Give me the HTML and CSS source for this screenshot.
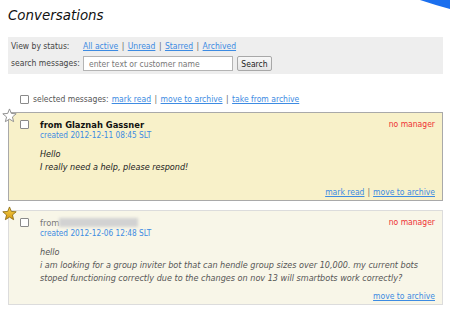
FILE: index.html
```html
<!DOCTYPE html>
<html>
<head>
    <title>Conversations</title>
    <meta charset="UTF-8">
    <link rel="stylesheet" href="styles.css">
</head>
<body>
    <svg class="corner" width="30" height="10" viewBox="0 0 30 10">
        <path d="M0 0 H30 V9 Q15 5 0 0 Z" fill="#1b6fee"/>
    </svg>

    <h1 class="page-title">Conversations</h1>

    <div class="filter">
        <span class="filter-label">View by status:</span>
        <span class="filter-links">
            <a href="#">All active</a><span class="sep">|</span><a href="#">Unread</a><span class="sep">|</span><a href="#">Starred</a><span class="sep">|</span><a href="#">Archived</a>
        </span>
        <span class="filter-label">search messages:</span>
        <span class="search">
            <input class="search-input" type="text" placeholder="enter text or customer name">
            <button class="search-btn">Search</button>
        </span>
    </div>

    <div class="bulk">
        <input class="check" type="checkbox">
        <span class="bulk-label">selected messages:</span>
        <a href="#">mark read</a><span class="sep">|</span><a href="#">move to archive</a><span class="sep">|</span><a href="#">take from archive</a>
    </div>

    <div class="message unread">
        <svg class="star" viewBox="0 0 16 16">
            <path d="M8 1 L9.95 5.8 L15.13 6.18 L11.15 9.55 L12.41 14.57 L8 11.85 L3.59 14.57 L4.85 9.55 L0.87 6.18 L6.05 5.8 Z" fill="#fff" stroke="#8c8c8c" stroke-width="1" stroke-linejoin="round"/>
        </svg>
        <input class="check" type="checkbox">
        <div class="msg-main">
            <div class="msg-head">
                <div>
                    <div class="msg-from">from Glaznah Gassner</div>
                    <div class="msg-date">created 2012-12-11 08:45 SLT</div>
                </div>
                <div class="msg-status">no manager</div>
            </div>
            <p class="msg-text">Hello<br>I really need a help, please respond!</p>
            <div class="msg-actions">
                <a href="#">mark read</a><span class="sep">|</span><a href="#">move to archive</a>
            </div>
        </div>
    </div>

    <div class="message read">
        <svg class="star" viewBox="0 0 16 16">
            <defs>
                <linearGradient id="gold" x1="0" y1="0" x2="0" y2="1">
                    <stop offset="0" stop-color="#f7d24a"/>
                    <stop offset="1" stop-color="#d79a12"/>
                </linearGradient>
            </defs>
            <path d="M8 1 L9.95 5.8 L15.13 6.18 L11.15 9.55 L12.41 14.57 L8 11.85 L3.59 14.57 L4.85 9.55 L0.87 6.18 L6.05 5.8 Z" fill="url(#gold)" stroke="#8a6a12" stroke-width="0.9" stroke-linejoin="round"/>
        </svg>
        <input class="check" type="checkbox">
        <div class="msg-main">
            <div class="msg-head">
                <div>
                    <div class="msg-from">from<span class="name-hidden"></span></div>
                    <div class="msg-date">created 2012-12-06 12:48 SLT</div>
                </div>
                <div class="msg-status">no manager</div>
            </div>
            <p class="msg-text">hello<br>i am looking for a group inviter bot that can hendle group sizes over 10,000. my current bots stoped functioning correctly due to the changes on nov 13 will smartbots work correctly?</p>
            <div class="msg-actions">
                <a href="#">move to archive</a>
            </div>
        </div>
    </div>
</body>
</html>
```

FILE: styles.css
```css
body {
    margin: 0;
    padding: 0 7px 0 8px;
    position: relative;
    font-family: "DejaVu Sans Condensed", "DejaVu Sans", sans-serif;
    font-stretch: condensed;
    font-size: 8.5px;
    color: #333;
    background: #fff;
}
a {
    color: #3d8be2;
    text-decoration: underline;
}
.sep {
    color: #666;
    margin: 0 3.5px;
}
.corner {
    position: absolute;
    top: 0;
    right: 0;
}
.page-title {
    margin: 7px 0 13px;
    font-size: 14.9px;
    font-style: italic;
    font-weight: normal;
    line-height: 17px;
    color: #111;
}

/* filter box */
.filter {
    display: grid;
    grid-template-columns: 72px auto;
    row-gap: 3px;
    align-items: center;
    padding: 3px;
    background: #eee;
}
.filter-label {
    color: #444;
    line-height: 13px;
}
.filter-links {
    line-height: 13px;
}
.search {
    display: flex;
    align-items: center;
    gap: 4px;
}
.search-input {
    box-sizing: border-box;
    width: 150px;
    height: 15px;
    margin: 0;
    padding: 0 5px;
    border: 1px solid #b4b4b4;
    font: inherit;
    color: #333;
    background: #fff;
}
.search-input::placeholder {
    color: #777;
}
.search-btn {
    box-sizing: border-box;
    width: 35px;
    height: 15px;
    margin: 0;
    padding: 0;
    border: 1px solid #a8a8a8;
    border-radius: 2px;
    background: linear-gradient(#f8f8f8, #e4e4e4);
    font: inherit;
    color: #222;
}

.check {
    appearance: none;
    box-sizing: border-box;
    flex: none;
    width: 9px;
    height: 9px;
    margin: 0;
    border: 1px solid #8a8a8a;
    border-radius: 1px;
    background: #fff;
}

.bulk {
    display: flex;
    align-items: center;
    margin: 18px 0 6px;
    padding-left: 12px;
    line-height: 14px;
    color: #555;
}
.bulk-label {
    margin: 0 3px 0 4px;
}

/* messages */
.message {
    position: relative;
    display: flex;
    gap: 11px;
    margin-bottom: 9px;
    padding: 6px 7px 1px 11px;
    border: 1px solid #aaa;
}
.message .check {
    margin-top: 1px;
}
.message.unread {
    background: #f8f1c9;
    border-color: #a9a9a9;
    color: #222;
}
.message.read {
    background: #f8f6e8;
    border-color: #dcdcdc;
    color: #555;
}
.star {
    position: absolute;
    left: -7px;
    top: -5px;
    width: 15px;
    height: 15px;
}
.msg-main {
    flex: 1;
}
.msg-head {
    display: flex;
    justify-content: space-between;
    line-height: 11px;
}
.msg-from {
    font-size: 9.3px;
}
.unread .msg-from {
    font-weight: bold;
    color: #111;
}
.read .msg-from {
    color: #777;
}
.name-hidden {
    display: inline-block;
    width: 79px;
    height: 9px;
    vertical-align: -1px;
    background: #d2d2d2;
    filter: blur(1.4px);
}
.msg-date {
    font-size: 8.2px;
    color: #3d8be2;
}
.msg-status {
    color: #ee3333;
}
.msg-text {
    min-height: 33px;
    margin: 7px 0 5px;
    font-size: 9px;
    line-height: 13px;
    font-style: italic;
}
.msg-actions {
    text-align: right;
    line-height: 13px;
}
.msg-actions .sep {
    margin: 0 3px;
}
```
